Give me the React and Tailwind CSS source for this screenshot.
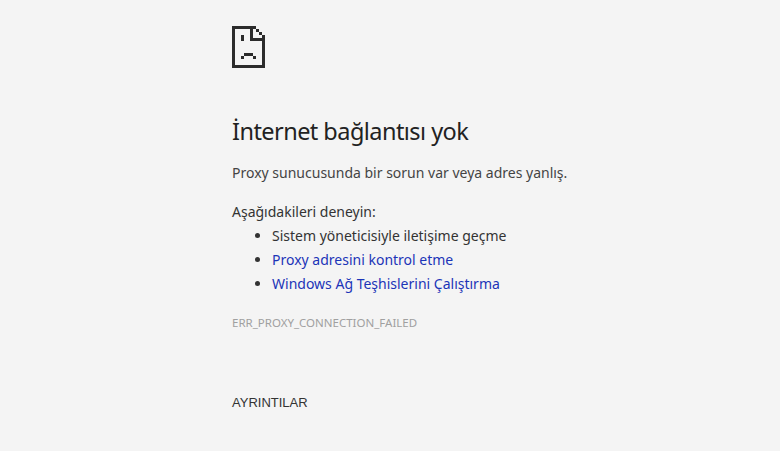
export default function App() {
  return (
    <div className="min-h-[451px] bg-[#f4f4f4] text-[#333] font-['Noto_Sans','Open_Sans',sans-serif] text-[14px]">
      <div className="ml-[232px] w-[500px] pt-[26px] flex flex-col items-start">
        <svg width="33" height="42" viewBox="0 0 33 42" shapeRendering="crispEdges" className="block" fill="#2b2b2b">
          <path d="M0 0h24v3H3v36h27V15H18V0h3v12h12v30H0z" />
          <path d="M24 3h3v3h-3zM27 6h3v3h-3zM30 9h3v3h-3z" />
          <path d="M9 9h3v6H9zM12 27h9v3h-9zM9 30h3v3H9zM21 30h3v3h-3z" />
        </svg>
        <h1 className="mt-[47px] text-[23.5px] tracking-[-0.55px] leading-[32px] font-normal text-[#222]">İnternet bağlantısı yok</h1>
        <p className="mt-[16px] leading-[20px] text-[#444]">Proxy sunucusunda bir sorun var veya adres yanlış.</p>
        <p className="mt-[19px] leading-[20px]">Aşağıdakileri deneyin:</p>
        <ul className="mt-[2px] pl-[40px] list-disc">
          <li className="leading-[24px]">Sistem yöneticisiyle iletişime geçme</li>
          <li className="leading-[24px]"><a className="text-[#1c35b8]">Proxy adresini kontrol etme</a></li>
          <li className="leading-[24px]"><a className="text-[#1c35b8]">Windows Ağ Teşhislerini Çalıştırma</a></li>
        </ul>
        <div className="mt-[19px] text-[11.5px] leading-[16px] text-[#a0a0a0]">ERR_PROXY_CONNECTION_FAILED</div>
        <div className="mt-[62px] text-[13px] leading-[20px] text-[#333] font-['Liberation_Sans',sans-serif]">AYRINTILAR</div>
      </div>
    </div>
  );
}
